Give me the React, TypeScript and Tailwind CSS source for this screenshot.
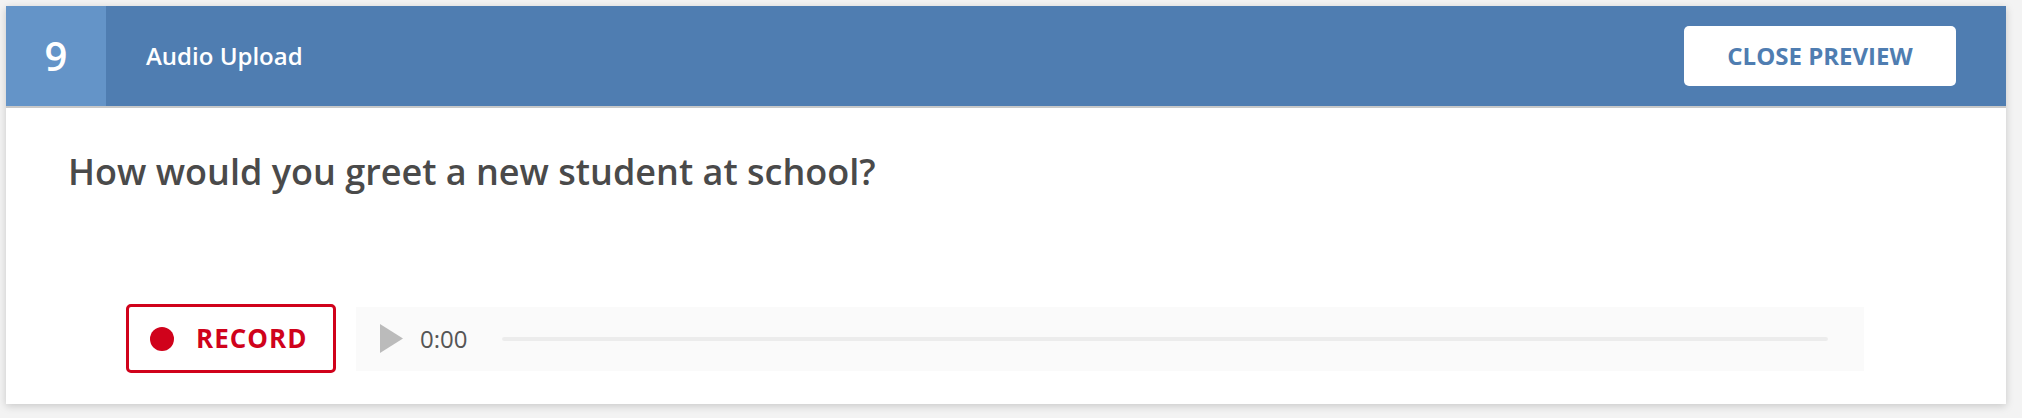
export default function App() {
  return (
    <main className="min-h-screen bg-[#f3f3f3] p-[6px] font-['Open_Sans',sans-serif]">
      <div className="bg-white w-[2000px] h-[398px] shadow-[0_2px_8px_rgba(0,0,0,0.18)] flex flex-col">
        {/* Header */}
        <div className="h-[102px] flex bg-[#4f7db1] border-b-2 border-[#c8c8c8]">
          <div className="w-[100px] bg-[#6494c8] flex items-center justify-center text-white text-[40px] font-semibold leading-none">
            9
          </div>
          <div className="flex-1 flex items-center pl-[40px] text-white text-[24px] font-semibold">
            Audio Upload
          </div>
          <div className="flex items-center pr-[50px]">
            <button className="w-[272px] h-[60px] bg-white rounded-[5px] text-[#4f7db1] text-[24px] font-bold">
              CLOSE PREVIEW
            </button>
          </div>
        </div>

        {/* Body */}
        <div className="flex-1 flex flex-col">
          <h2 className="pl-[62px] pt-[40px] text-[36px] font-semibold text-[#4a4a4a] leading-[48px]">
            How would you greet a new student at school?
          </h2>
          <div className="mt-auto mb-[31px] pl-[120px] flex items-center gap-[20px]">
            <button className="w-[210px] h-[69px] border-[3px] border-[#d0021b] rounded-[5px] flex items-center pl-[21px] gap-[22px] text-[#d0021b] text-[26px] font-bold tracking-[1px]">
              <span className="w-[24px] h-[24px] rounded-full bg-[#d0021b]" />
              RECORD
            </button>
            <div className="w-[1508px] h-[64px] bg-[#fafafa] flex items-center pl-[24px] pr-[36px]">
              <svg width="23" height="29" viewBox="0 0 23 29" className="shrink-0">
                <polygon points="0,0 23,14.5 0,29" fill="#bbbbbb" />
              </svg>
              <span className="ml-[17px] text-[24px] text-[#555555] leading-none">0:00</span>
              <div className="ml-[35px] flex-1 h-[4px] rounded-full bg-[#ececec]" />
            </div>
          </div>
        </div>
      </div>
    </main>
  );
}
